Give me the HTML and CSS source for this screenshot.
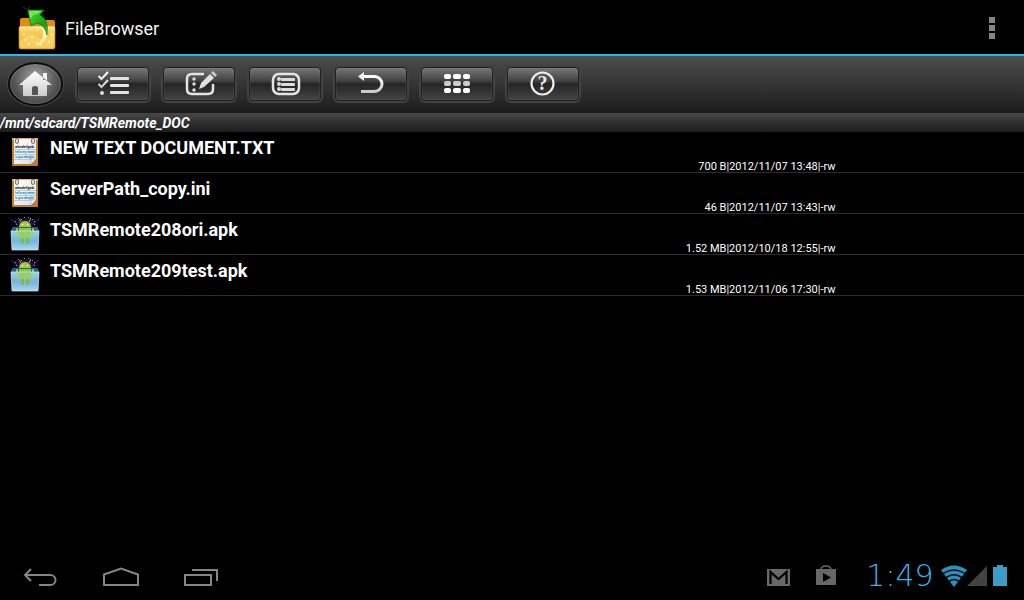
FILE: index.html
```html
<!DOCTYPE html>
<html lang="en">
<head>
  <meta charset="UTF-8" />
  <title>FileBrowser</title>
  <link rel="stylesheet" href="styles.css">
</head>
<body>

  <!-- shared gradients and file type icons -->
  <svg class="defs" width="0" height="0" aria-hidden="true">
    <defs>
      <linearGradient id="silver" x1="0" y1="0" x2="0" y2="1">
        <stop offset="0" stop-color="#fff" />
        <stop offset="1" stop-color="#ccc" />
      </linearGradient>
      <linearGradient id="paper" x1="0" y1="0" x2="1" y2="1">
        <stop offset="0" stop-color="#fff" />
        <stop offset="1" stop-color="#dedede" />
      </linearGradient>
      <linearGradient id="box" x1="0" y1="0" x2="0" y2="1">
        <stop offset="0" stop-color="#a9d8f0" />
        <stop offset="0.6" stop-color="#5fa5d2" />
        <stop offset="1" stop-color="#a4d3ec" />
      </linearGradient>
      <radialGradient id="night">
        <stop offset="0.3" stop-color="#452080" />
        <stop offset="1" stop-color="#100520" stop-opacity="0" />
      </radialGradient>
    </defs>
    <symbol id="icon-text" viewBox="0 0 30 36">
      <rect x="2" y="4" width="26" height="28" rx="1" fill="#bd7c2e" />
      <rect x="2" y="4" width="26" height="2" fill="#e6ad5d" />
      <path d="M4 5h22v20l-5 5H4z" fill="url(#paper)" />
      <path d="M4 15.500h22M4 20.500h22M4 25.500h19" stroke="#b9cbd5" stroke-width="1" />
      <path d="M21 30v-5h5z" fill="#fff" stroke="#aaa" stroke-width=".7" />
      <g fill="#ddd" stroke="#777" stroke-width="1">
        <rect x="5.500" y="4.500" width="3" height="5" rx="1.500" />
        <rect x="21.500" y="4.500" width="3" height="5" rx="1.500" />
      </g>
      <text class="scrawl dark" x="5" y="14">abcdefgab</text>
      <text class="scrawl" x="5" y="19">hello my name</text>
      <text class="scrawl" x="5" y="24">is guo donglei</text>
    </symbol>
    <symbol id="icon-apk" viewBox="0 0 30 36">
      <ellipse cx="15" cy="8" rx="14" ry="8" fill="url(#night)" />
      <path d="M1 3l6 5M29 3l-6 5" stroke="#532691" />
      <g fill="#56a9f3">
        <rect x="8" y="2" width="1" height="1" /><rect x="14" y="1" width="1" height="1" />
        <rect x="20" y="2" width="1" height="1" /><rect x="24" y="5" width="1" height="1" />
        <rect x="5" y="5" width="1" height="1" />
      </g>
      <g fill="#ee6080">
        <rect x="11" y="3" width="1" height="1" /><rect x="18" y="1" width="1" height="1" />
        <rect x="6" y="8" width="1" height="1" /><rect x="24" y="8" width="1" height="1" />
        <rect x="22" y="3" width="1" height="1" />
      </g>
      <path d="M3 11h24l2 4-1 19H2L1 15z" fill="url(#box)" />
      <path d="M1 15l2-4h24l2 4z" fill="#285f88" />
      <path d="M9 11a6 6 0 0 1 12 0z" fill="#9fcc2b" />
      <path d="M11 6L9.500 3M19 6l1.500-3" stroke="#9fcc2b" />
      <circle cx="12.500" cy="8.500" r=".8" fill="#fff" />
      <circle cx="17.500" cy="8.500" r=".8" fill="#fff" />
      <path d="M9 12h12v10q0 1-1 1H10q-1 0-1-1z" fill="#8cc63c" />
      <rect x="6" y="12" width="2" height="8" rx="1" fill="#96cf48" />
      <rect x="22" y="12" width="2" height="8" rx="1" fill="#96cf48" />
      <rect x="11" y="22" width="3" height="6" rx="1" fill="#6fa820" />
      <rect x="16" y="22" width="3" height="6" rx="1" fill="#6fa820" />
      <path d="M1 15h28l-1 19H2z" fill="#b9e2fa" fill-opacity=".25" stroke="#c9eafb" stroke-width=".7" />
    </symbol>
  </svg>

  <header class="title-bar">
    <svg class="app-icon" width="40" height="44" viewBox="0 0 40 44" aria-hidden="true">
      <defs>
        <linearGradient id="folder" x1="0" y1="0" x2="0" y2="1">
          <stop offset="0" stop-color="#fff0ae" />
          <stop offset="0.25" stop-color="#f6cc58" />
          <stop offset="1" stop-color="#f0b322" />
        </linearGradient>
        <linearGradient id="leaf" x1="0" y1="0" x2="1" y2="1">
          <stop offset="0" stop-color="#4ee52f" />
          <stop offset="0.7" stop-color="#129b18" />
          <stop offset="1" stop-color="#7cc34a" />
        </linearGradient>
      </defs>
      <path d="M3 14q0-2 2-2h8l2 2h21q2 0 2 2v10H3z" fill="#e28b10" />
      <rect x="2" y="20" width="36" height="23" rx="2" fill="url(#folder)" stroke="#d9951b" stroke-width=".6" />
      <path d="M3 36q9-12 18-5t16-8v17q0 2-2 2H5q-2 0-2-2z" fill="#fbdc80" fill-opacity=".6" />
      <g fill="#fff3c4">
        <circle cx="8" cy="34" r="1" /><circle cx="12" cy="38" r="1" /><circle cx="15" cy="31" r="1" />
        <circle cx="20" cy="37" r="1" /><circle cx="32" cy="36" r="1" /><circle cx="34" cy="28" r="1" />
        <circle cx="7" cy="28" r="1" /><circle cx="24" cy="39" r="1" />
      </g>
      <path d="M20 40q9-9 5-20l5 1q4 12-10 19z" fill="#fffbd8" fill-opacity=".8" />
      <path d="M11 4h16l-4 5q9 4 7 20-2-10-10-12l-6 3-1-5z" fill="url(#leaf)" stroke="#0c6d10" stroke-width=".7" />
      <path d="M12 5h12l-3 3-5 1-3 4z" fill="#a5fa83" fill-opacity=".6" />
      <path d="M6 1l12 7M13 0l-3 8" stroke="#777" stroke-width=".4" />
    </svg>
    <h1>FileBrowser</h1>
    <button class="overflow-btn" aria-label="More options">
      <svg width="6" height="22" viewBox="0 0 6 22" fill="#858585">
        <rect width="6" height="6" /><rect y="8" width="6" height="6" /><rect y="16" width="6" height="6" />
      </svg>
    </button>
  </header>

  <div class="toolbar">
    <button class="home-btn" aria-label="Home">
      <svg width="42" height="30" viewBox="0 0 42 30">
        <path d="M28 4h4v7h-4zM20 2L4 16h4v10q0 1 1 1h22q1 0 1-1V16h5z" fill="url(#silver)" />
        <path d="M17 26v-7q0-2 3-2t3 2v7z" fill="#555" />
      </svg>
    </button>
    <button class="tool-btn" aria-label="Select">
      <svg width="36" height="30" viewBox="0 0 36 30">
        <g fill="none" stroke="url(#silver)" stroke-width="2">
          <path d="M3.500 7l3 3 6.500-7M3.500 15l3 3 6.500-7" />
        </g>
        <circle cx="7" cy="24" r="2" fill="#ddd" />
        <g fill="#e4e4e4">
          <rect x="15" y="8" width="19" height="3" rx="1" />
          <rect x="15" y="15" width="19" height="3" rx="1" />
          <rect x="15" y="22" width="19" height="3" rx="1" />
        </g>
      </svg>
    </button>
    <button class="tool-btn" aria-label="Edit">
      <svg width="36" height="30" viewBox="0 0 36 30">
        <path d="M23 5H11q-5 0-5 5v10q0 5 5 5h16q5 0 5-5v-5" fill="none" stroke="#e4e4e4" stroke-width="2.500" />
        <g fill="#ddd"><circle cx="13" cy="10" r="1.700" /><circle cx="13" cy="15" r="1.700" /><circle cx="13" cy="21" r="1.700" /></g>
        <path d="M18 20l2-6 9-9 4 4-10 9z" fill="#e0e0e0" />
        <path d="M30 4l2-2 4 4-2 2z" fill="#ccc" />
      </svg>
    </button>
    <button class="tool-btn" aria-label="List view">
      <svg width="36" height="30" viewBox="0 0 36 30">
        <rect x="6" y="5" width="26" height="20" rx="6" fill="none" stroke="#e4e4e4" stroke-width="2.500" />
        <g fill="#dcdcdc">
          <circle cx="12" cy="10" r="2" /><circle cx="12" cy="15" r="2" /><circle cx="12" cy="20" r="2" />
          <rect x="14" y="9" width="14" height="3" rx="1" />
          <rect x="14" y="14" width="14" height="3" rx="1" />
          <rect x="14" y="19" width="14" height="3" rx="1" />
        </g>
      </svg>
    </button>
    <button class="tool-btn" aria-label="Back">
      <svg width="36" height="30" viewBox="0 0 36 30">
        <path d="M9 7.500h12.500a7.500 7.500 0 0 1 0 15H8" fill="none" stroke="url(#silver)" stroke-width="3" />
        <path d="M5 7.500L11 3v9z" fill="#f0f0f0" />
      </svg>
    </button>
    <button class="tool-btn" aria-label="Grid view">
      <svg width="36" height="30" viewBox="0 0 36 30">
        <g fill="#fff">
          <rect x="5" y="5" width="7" height="5" rx="2" /><rect x="14" y="5" width="8" height="5" rx="2" /><rect x="24" y="5" width="7" height="5" rx="2" />
          <rect x="5" y="19" width="7" height="5" rx="2" /><rect x="14" y="19" width="8" height="5" rx="2" /><rect x="24" y="19" width="7" height="5" rx="2" />
        </g>
        <g fill="#ccc">
          <rect x="5" y="12" width="7" height="5" rx="2" /><rect x="14" y="12" width="8" height="5" rx="2" /><rect x="24" y="12" width="7" height="5" rx="2" />
        </g>
      </svg>
    </button>
    <button class="tool-btn" aria-label="Help">
      <svg width="36" height="30" viewBox="0 0 36 30">
        <circle cx="17.500" cy="14.500" r="11" fill="none" stroke="#eee" stroke-width="2.200" />
        <text class="help-mark" x="17.500" y="21">?</text>
      </svg>
    </button>
  </div>

  <div class="path">/mnt/sdcard/TSMRemote_DOC</div>

  <main>
    <ul class="file-list">
      <li class="file">
        <svg class="file-icon" width="30" height="36"><use href="#icon-text" /></svg>
        <span class="file-name">NEW TEXT DOCUMENT.TXT</span>
        <span class="file-info">700 B|2012/11/07 13:48|-rw</span>
      </li>
      <li class="file">
        <svg class="file-icon" width="30" height="36"><use href="#icon-text" /></svg>
        <span class="file-name">ServerPath_copy.ini</span>
        <span class="file-info">46 B|2012/11/07 13:43|-rw</span>
      </li>
      <li class="file">
        <svg class="file-icon" width="30" height="36"><use href="#icon-apk" /></svg>
        <span class="file-name">TSMRemote208ori.apk</span>
        <span class="file-info">1.52 MB|2012/10/18 12:55|-rw</span>
      </li>
      <li class="file">
        <svg class="file-icon" width="30" height="36"><use href="#icon-apk" /></svg>
        <span class="file-name">TSMRemote209test.apk</span>
        <span class="file-info">1.53 MB|2012/11/06 17:30|-rw</span>
      </li>
    </ul>
  </main>

  <footer class="system-bar">
    <nav class="nav-keys">
      <button aria-label="Back">
        <svg width="38" height="24" viewBox="0 0 38 24">
          <path d="M3 8h25.500a4.800 4.800 0 0 1 0 10H17M9 2L3 8l6 6" />
        </svg>
      </button>
      <button aria-label="Home">
        <svg width="38" height="24" viewBox="0 0 38 24">
          <path d="M2 18V7.500L19 1.500l17 6V18z" />
        </svg>
      </button>
      <button aria-label="Recent apps">
        <svg width="38" height="24" viewBox="0 0 38 24">
          <path d="M3 8h26v10H3zM10 3h25v11" />
        </svg>
      </button>
    </nav>
    <div class="status">
      <svg width="23" height="24" viewBox="0 0 23 24" role="img" aria-label="Mail">
        <rect y="5" width="23" height="17" fill="#686868" />
        <path d="M3.500 20V8l8 7 8-7v12" fill="none" stroke="#000" stroke-width="2.200" />
      </svg>
      <svg width="20" height="24" viewBox="0 0 20 24" role="img" aria-label="Store">
        <path d="M5 6q0-4 5-4t5 4" fill="none" stroke="#686868" stroke-width="1.500" />
        <path d="M0 5h20v15q0 1-1 1H1q-1 0-1-1z" fill="#686868" />
        <path d="M7 9l8 4.500L7 18z" fill="#000" />
      </svg>
      <span class="clock">1:49</span>
      <div class="signals">
        <svg width="26" height="24" viewBox="0 0 26 24" role="img" aria-label="Wi-Fi">
          <path d="M0 6q13-9 26 0L13 23z" fill="#2b90bd" />
          <path d="M2 9.500q11-7 22 0M5 13.500q8-5.500 16 0M8 17.500q5-4 10 0" fill="none" stroke="#000" stroke-width="1.300" />
        </svg>
        <svg width="20" height="24" viewBox="0 0 20 24" role="img" aria-label="Signal">
          <path d="M20 2v20H0z" fill="#424242" />
        </svg>
        <svg class="battery" width="14" height="24" viewBox="0 0 14 24" role="img" aria-label="Battery">
          <path d="M0 3h4V1h6v2h4v19H0z" fill="#3b9cc6" />
        </svg>
      </div>
    </div>
  </footer>

</body>
</html>
```
FILE: styles.css
```css
* {
  box-sizing: border-box;
}
body {
  margin: 0;
  min-height: 100vh;
  display: flex;
  flex-direction: column;
  background: #000;
  color: #fff;
  font-family: Roboto, "Liberation Sans", sans-serif;
}
button {
  display: flex;
  align-items: center;
  justify-content: center;
  padding: 0;
  border: none;
  background: none;
  cursor: pointer;
}
svg {
  display: block;
  flex: none;
}
.defs {
  position: absolute;
}

/* title bar */
.title-bar {
  display: flex;
  align-items: center;
  height: 56px;
  padding: 2px 16px 0 17px;
  border-bottom: 2px solid #33b5e5;
}
.title-bar h1 {
  margin: 0;
  padding-left: 8px;
  font-size: 18px;
  font-weight: 400;
  color: #f3f3f3;
}
.overflow-btn {
  width: 32px;
  height: 48px;
  margin-left: auto;
}

/* toolbar */
.toolbar {
  display: flex;
  align-items: center;
  gap: 14px;
  height: 57px;
  padding: 0 8px 2px;
  background: linear-gradient(#4d4d4d, #1c1c1c);
}
.home-btn {
  width: 55px;
  height: 44px;
  border: 2px solid #0c0c0c;
  border-radius: 50%;
  background: radial-gradient(ellipse at 50% 35%, #a5a5a5, #626262 50%, #303030 90%);
  box-shadow: 0 0 0 1px #484848, inset 0 0 2px #aaa;
}
.tool-btn {
  width: 72px;
  height: 34px;
  border: 1px solid #202020;
  border-radius: 4px;
  background: linear-gradient(#777, #424242 40%, #252525 50%, #444);
  box-shadow: 0 0 0 2px #424242, inset 0 0 1px #999;
}
.help-mark {
  font-family: "Liberation Serif", serif;
  font-size: 20px;
  font-weight: 700;
  text-anchor: middle;
  fill: #e8e8e8;
}
.path {
  height: 19px;
  line-height: 20px;
  background: linear-gradient(#474747, #1c1c1c);
  font-size: 14px;
  font-weight: 700;
  font-style: italic;
}

/* file list */
main {
  flex: 1;
}
.file-list {
  margin: 0;
  padding: 0;
  list-style: none;
}
.file {
  display: grid;
  grid-template-columns: 30px 1fr 1fr;
  column-gap: 10px;
  height: 41px;
  padding: 0 18.4% 0 10px;
  border-bottom: 1px solid #2b2b2b;
}
.file-icon {
  margin-top: 2px;
}
.file-name {
  line-height: 32px;
  font-size: 18px;
  font-weight: 700;
}
.file-info {
  align-self: end;
  text-align: right;
  line-height: 11px;
  font-size: 11px;
}
.scrawl {
  font-size: 3px;
  font-weight: 700;
  fill: #1689cc;
}
.dark {
  font-size: 4px;
  fill: #222;
}

/* system bar */
.system-bar {
  display: flex;
  align-items: center;
  justify-content: space-between;
  height: 48px;
  padding: 0 17px 0 22px;
}
.nav-keys {
  display: flex;
  gap: 42px;
  padding-top: 5px;
}
.nav-keys path {
  fill: none;
  stroke: #858585;
  stroke-width: 2;
}
.status {
  display: flex;
  align-items: center;
  gap: 26px;
}
.clock {
  min-width: 76px;
  font-family: "DejaVu Sans Light", "DejaVu Sans", sans-serif;
  font-size: 30px;
  font-weight: 200;
  line-height: 32px;
  text-align: center;
  color: #33b5e5;
}
.signals {
  display: flex;
  margin-left: -23px;
}
.battery {
  margin-left: 6px;
}
```
